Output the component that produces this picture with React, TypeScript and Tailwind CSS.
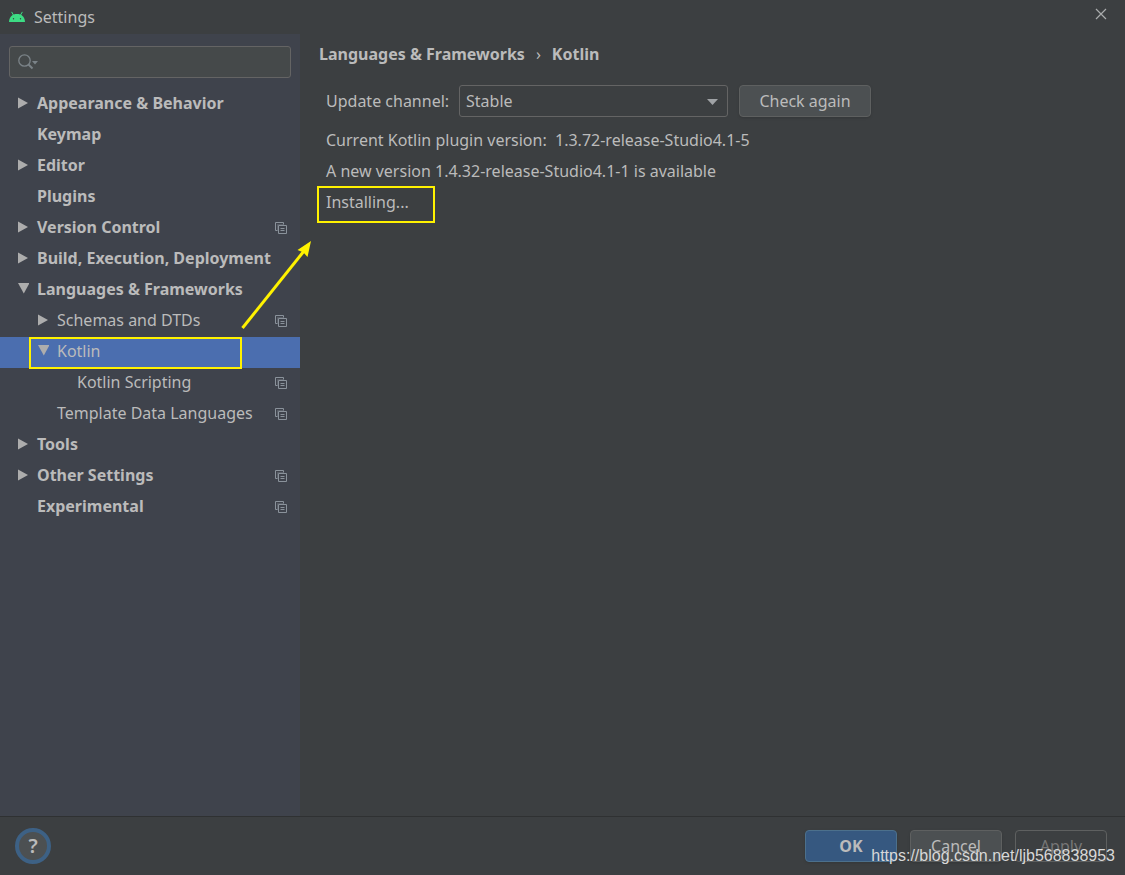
import { useState } from 'react';

interface TreeItem {
  label: string;
  level?: number;
  bold?: boolean;
  arrow?: 'right' | 'down';
  perProject?: boolean;
}

const items: TreeItem[] = [
  { label: 'Appearance & Behavior', bold: true, arrow: 'right' },
  { label: 'Keymap', bold: true },
  { label: 'Editor', bold: true, arrow: 'right' },
  { label: 'Plugins', bold: true },
  { label: 'Version Control', bold: true, arrow: 'right', perProject: true },
  { label: 'Build, Execution, Deployment', bold: true, arrow: 'right' },
  { label: 'Languages & Frameworks', bold: true, arrow: 'down' },
  { label: 'Schemas and DTDs', level: 1, arrow: 'right', perProject: true },
  { label: 'Kotlin', level: 1, arrow: 'down' },
  { label: 'Kotlin Scripting', level: 2, perProject: true },
  { label: 'Template Data Languages', level: 1, perProject: true },
  { label: 'Tools', bold: true, arrow: 'right' },
  { label: 'Other Settings', bold: true, arrow: 'right', perProject: true },
  { label: 'Experimental', bold: true, perProject: true },
];

const indents = ['pl-[17px]', 'pl-[37px]', 'pl-[57px]'];

const AndroidIcon = () => (
  <svg width="16" height="12" viewBox="0 0 16 12" aria-hidden="true">
    <path d="M0 11C.3 5.500 3.500 3 8 3s7.700 2.500 8 8z" fill="#3ddc84" />
    <path d="M2.800 1.200 4.800 4.600M13.200 1.200l-2 3.400" stroke="#3ddc84" strokeWidth="1" strokeLinecap="round" />
    <circle cx="4.500" cy="7.700" r="0.700" fill="#3c3f41" />
    <circle cx="11.500" cy="7.700" r="0.700" fill="#3c3f41" />
  </svg>
);

const CopyIcon = () => (
  <svg className="mt-0.5" width="12" height="12" viewBox="0 0 12 12" fill="none" stroke="#8a929b" aria-hidden="true">
    <path d="M2.500 8.500h-2v-8h8v2" />
    <path d="M3.500 3.500h8v8h-8zM5.500 6.500h4M5.500 8.500h4" />
    <path d="M2.500 8.500v-6h6" strokeOpacity="0.35" />
  </svg>
);

const TreeArrow = ({ direction }: { direction: 'right' | 'down' }) => (
  <svg width="12" height="12" viewBox="0 0 12 12" fill="#adadad" aria-hidden="true">
    {direction === 'right' ? <path d="M1 .5v11L11 6z" /> : <path d="M1 0h11.500L6.800 10.500z" />}
  </svg>
);

const Tree = () => {
  const [selected, setSelected] = useState('Kotlin');

  return (
    <ul>
      {items.map(({ label, level = 0, bold, arrow, perProject }) => (
        <li key={label} className={`relative ${label === selected ? 'bg-[#4b6eaf]' : ''}`}>
          <button
            type="button"
            onClick={() => setSelected(label)}
            className={`flex h-[31px] w-full items-center pr-[13px] pb-1 text-left ${indents[level]}`}
          >
            <span className="w-5 shrink-0">{arrow && <TreeArrow direction={arrow} />}</span>
            <span className={`flex-1 whitespace-nowrap ${bold ? 'font-bold' : ''}`}>{label}</span>
            {perProject && <CopyIcon />}
          </button>
          {label === 'Kotlin' && (
            <span className="pointer-events-none absolute top-0 left-[29px] h-8 w-[213px] border-2 border-[#fff200]" />
          )}
        </li>
      ))}
    </ul>
  );
};

const Sidebar = () => (
  <aside className="w-[300px] shrink-0 bg-[#3f434c] pt-3">
    <div className="mx-[9px] mb-[11px] flex h-8 items-center rounded-[3px] border border-[#646464] bg-[#45494a] px-2">
      <svg width="21" height="16" viewBox="0 0 21 16" fill="none" aria-hidden="true">
        <circle cx="6.500" cy="6.500" r="5.700" stroke="#7b8388" strokeWidth="1.300" />
        <path d="m10.500 10.500 4 4" stroke="#7b8388" strokeWidth="2" />
        <path d="M14 7h6l-3 3.500z" fill="#7b8388" />
      </svg>
      <input type="text" aria-label="Search settings" className="min-w-0 flex-1 bg-transparent outline-none" />
    </div>
    <Tree />
  </aside>
);

const KotlinPanel = () => (
  <main className="flex-1 pt-2 pl-[19px]">
    <h1 className="flex h-6 items-center gap-[11px] font-bold">
      <span>Languages &amp; Frameworks</span>
      <span className="font-normal">›</span>
      <span>Kotlin</span>
    </h1>
    <div className="pt-[19px] pl-[7px]">
      <div className="flex h-8 items-center">
        <label htmlFor="channel" className="w-[133px]">Update channel:</label>
        <div className="relative mr-[11px]">
          <select
            id="channel"
            className="h-8 w-[269px] appearance-none rounded-[3px] border border-[#646464] bg-[#3c3f41] pl-[6px] outline-none"
          >
            <option>Stable</option>
          </select>
          <svg className="pointer-events-none absolute top-[14px] right-[10px]" width="11" height="6" viewBox="0 0 11 6" aria-hidden="true">
            <path d="M0 0h11L5.500 6z" fill="#9fa2a5" />
          </svg>
        </div>
        <button type="button" className="h-8 w-[132px] rounded border border-[#5e6060] bg-[#4c5052] shadow-sm">
          Check again
        </button>
      </div>
      <div className="mt-2 leading-[31px]">
        <p>
          Current Kotlin plugin version:&nbsp; 1.3.72-release-Studio4.1-5
        </p>
        <p>A new version 1.4.32-release-Studio4.1-1 is available</p>
        <p className="relative">
          Installing...
          <span className="pointer-events-none absolute -top-px -left-[9px] h-[37px] w-[118px] border-2 border-[#fff200]" />
        </p>
      </div>
    </div>
  </main>
);

const Footer = () => (
  <footer className="flex h-[59px] items-center gap-[13px] border-t border-[#2f3132] pr-[18px] pl-[15px]">
    <button
      type="button"
      aria-label="Help"
      className="mr-auto flex size-9 items-center justify-center rounded-full border-4 border-[#3d6185] bg-[#4c5052] text-xl font-semibold"
    >
      ?
    </button>
    <button type="button" className="h-8 w-[92px] rounded border border-[#4c708c] bg-[#365880] font-bold shadow-sm">
      OK
    </button>
    <button type="button" className="h-8 w-[92px] rounded border border-[#5e6060] bg-[#4c5052] shadow-sm">
      Cancel
    </button>
    <button type="button" disabled className="h-8 w-[92px] rounded border border-[#5e6060] text-[#777777]">
      Apply
    </button>
  </footer>
);

const App = () => (
  <div className="relative flex min-h-screen flex-col bg-[#3c3f41] font-['Noto_Sans',sans-serif] text-base text-[#bbbbbb]">
    <header className="flex h-[34px] items-center pr-[18px] pl-[9px]">
      <AndroidIcon />
      <span className="ml-[9px]">Settings</span>
      <button type="button" aria-label="Close" className="ml-auto pb-[6px]">
        <svg width="12" height="12" viewBox="0 0 12 12" stroke="#aaacad" strokeWidth="1.200" aria-hidden="true">
          <path d="m1 1 10 10M11 1 1 11" />
        </svg>
      </button>
    </header>
    <div className="flex flex-1">
      <Sidebar />
      <KotlinPanel />
    </div>
    <Footer />

    {/* callout arrow from the tree to the install status */}
    <svg className="pointer-events-none absolute top-[240px] left-[240px]" width="72" height="90" viewBox="0 0 72 90" aria-hidden="true">
      <path d="M2.500 88 64 11" stroke="#fff200" strokeWidth="3" />
      <path d="M71 1 67.500 17 63.500 12.500 57.500 10z" fill="#fff200" />
    </svg>
    <span className="pointer-events-none absolute right-[10px] bottom-[7px] font-['Liberation_Sans',sans-serif] text-[#d8d8d8]">
      https://blog.csdn.net/ljb568838953
    </span>
  </div>
);

export default App;
